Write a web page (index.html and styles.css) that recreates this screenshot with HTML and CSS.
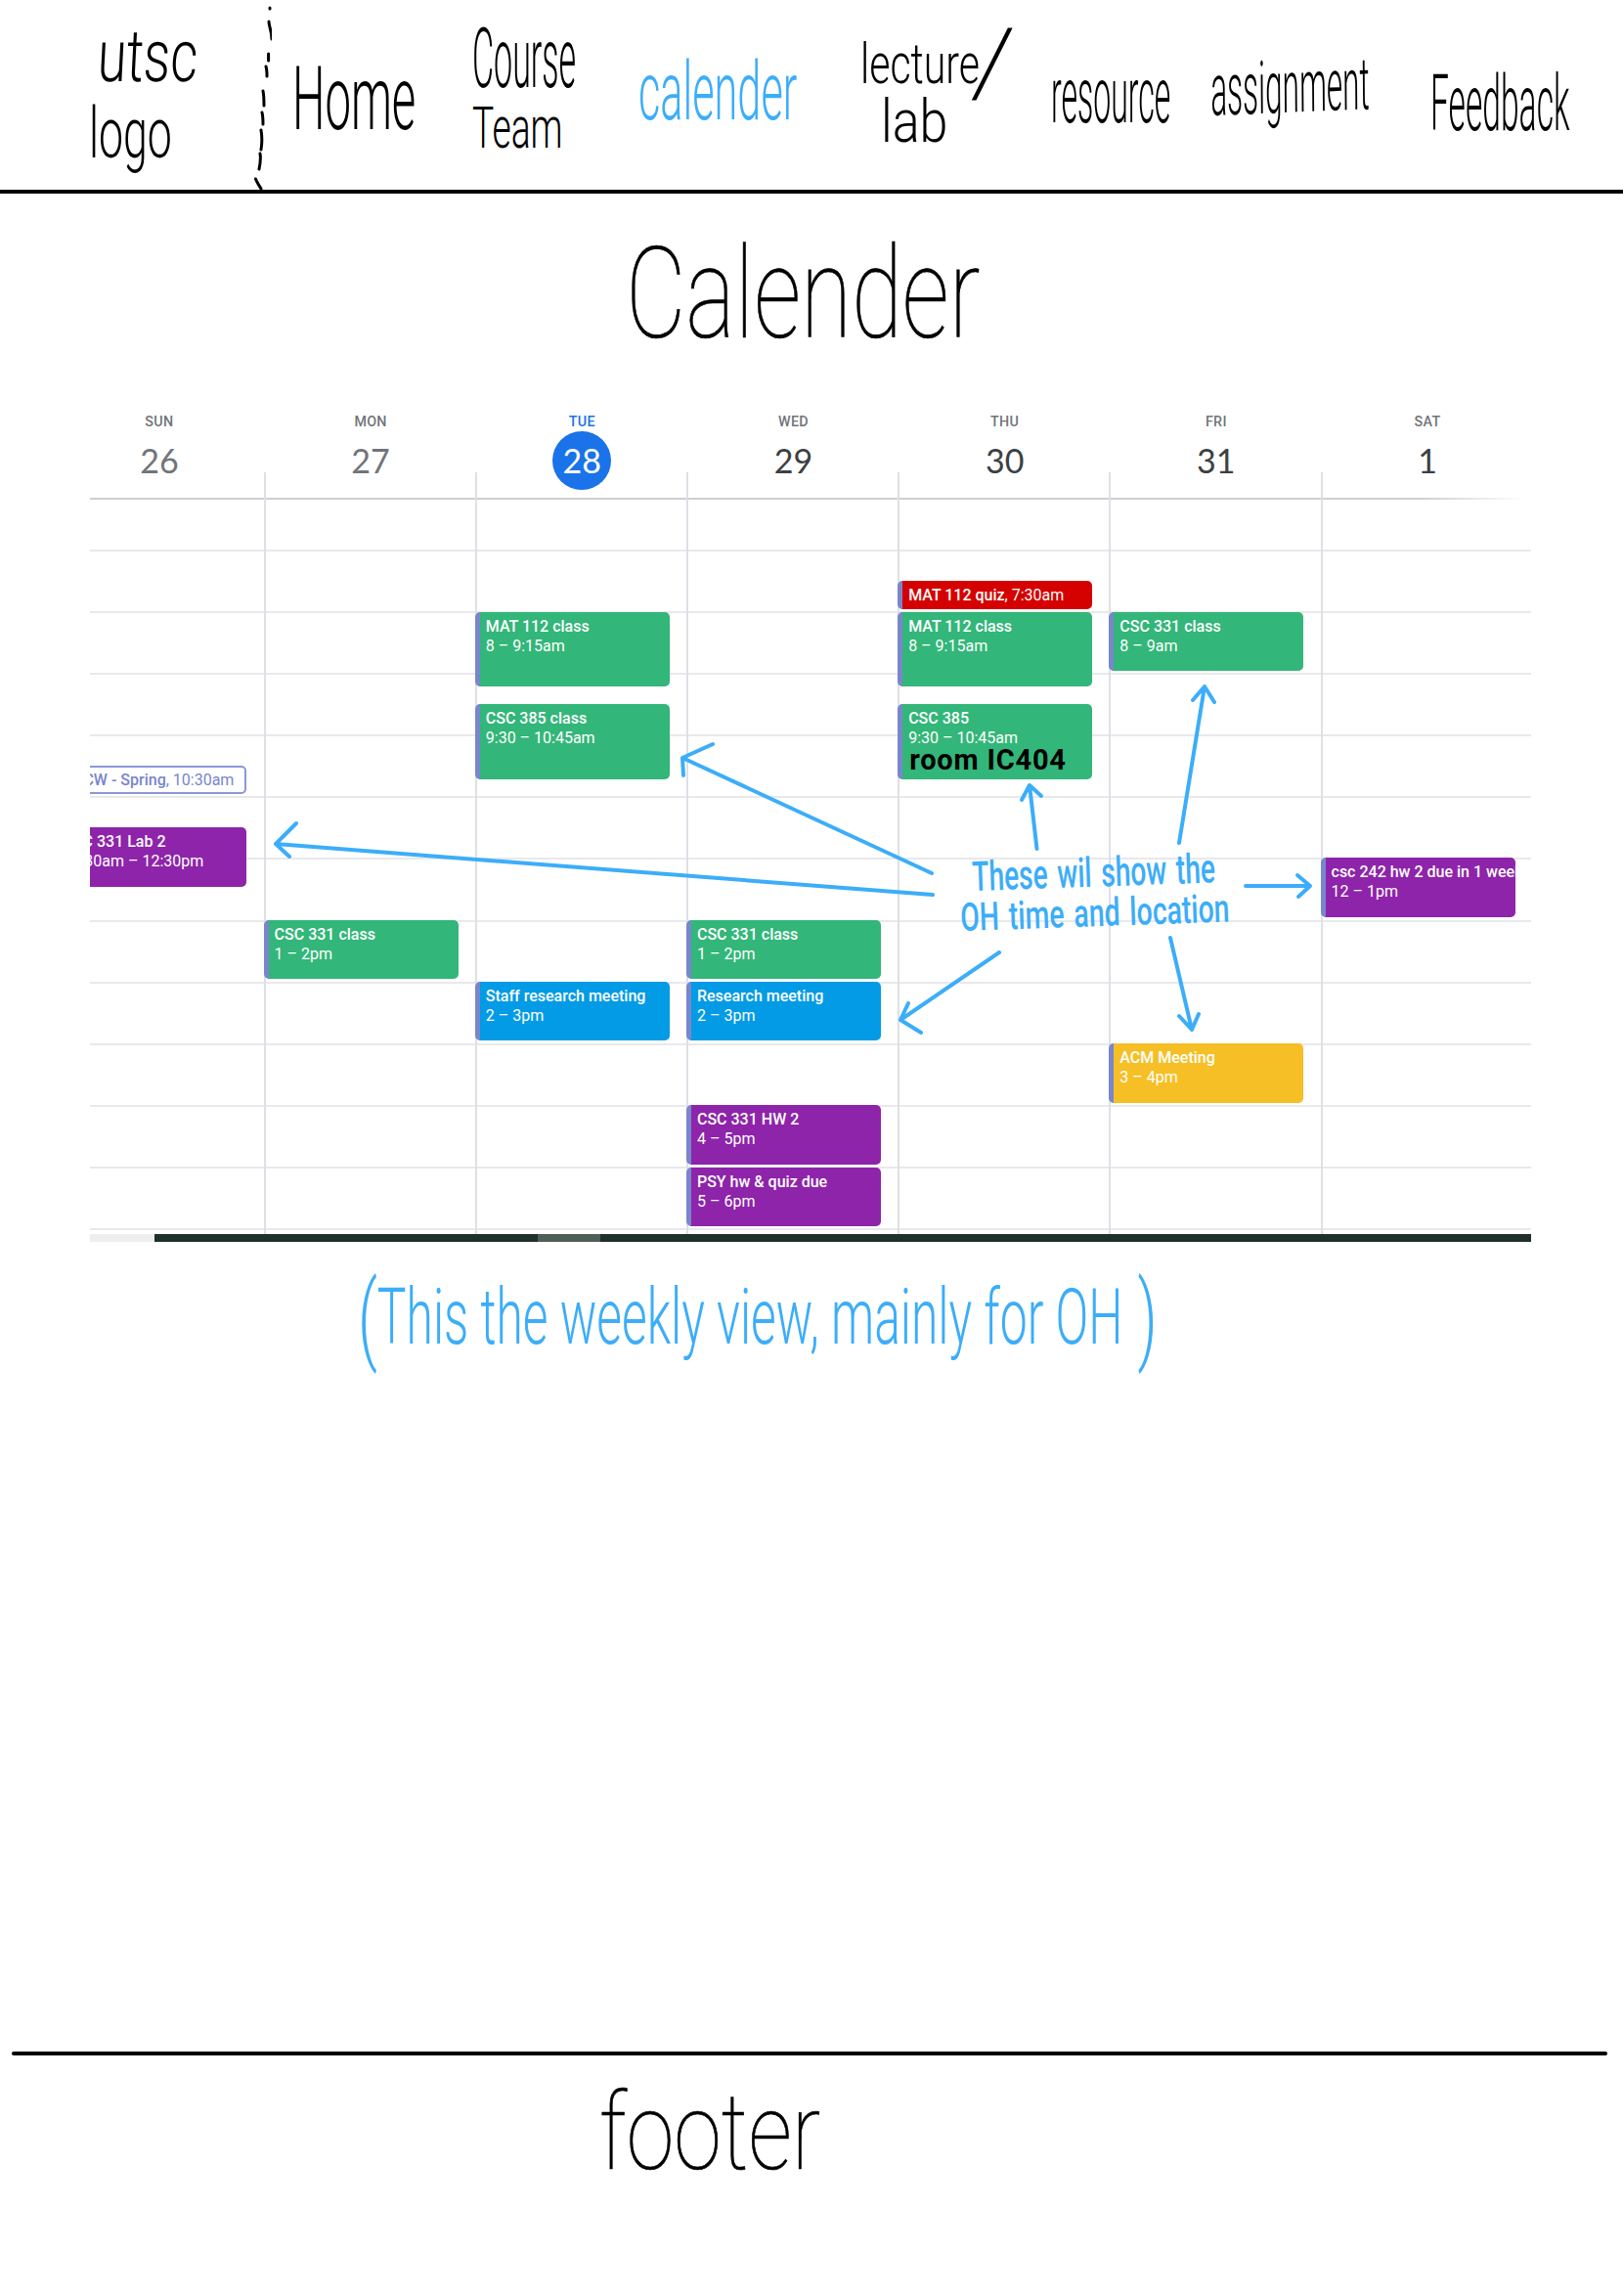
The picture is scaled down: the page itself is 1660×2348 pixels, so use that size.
FILE: index.html
```html
<!DOCTYPE html>
<html lang="en">
<head>
<meta charset="utf-8">
<title>Calender wireframe</title>
<link rel="stylesheet" href="styles.css">
</head>
<body>
<div class="page">
  <header class="site-head">
    <div class="stack stack-logo">
      <div class="hw hw-utsc"><span>utsc</span></div>
      <div class="hw hw-logo"><span>logo</span></div>
    </div>
    <svg class="divider" width="18" height="194" viewBox="0 0 18 194" aria-hidden="true">
      <path d="M16 8v1M15 22c0 5 3 10 3 18M14.600 55v7M12 68c1 3 1 6 1 10M9 93c1 5 1 10 1 15M8 115c1 4 1 8 1 12M7 133c1 6 1 14 0 20M6 157c1 5 0 11-1 16M1.500 183c1 3 3 6 5.500 10"/>
    </svg>
    <nav class="nav">
      <a class="hw hw-home"><span>Home</span></a>
      <a class="stack stack-course">
        <div class="hw hw-course"><span>Course</span></div>
        <div class="hw hw-team"><span>Team</span></div>
      </a>
      <a class="hw hw-calender"><span>calender</span></a>
      <a class="stack stack-lecture">
        <div class="hw hw-lecture"><span>lecture</span></div>
        <div class="hw hw-lab"><span>lab</span></div>
      </a>
      <div class="hw hw-slash"><span>/</span></div>
      <a class="hw hw-resource"><span>resource</span></a>
      <a class="hw hw-assignment"><span>assignment</span></a>
      <a class="hw hw-feedback"><span>Feedback</span></a>
    </nav>
  </header>

  <main class="main">
    <h1 class="hw hw-title"><span>Calender</span></h1>

    <section class="cal">
      <div class="cal-inner">
        <div class="cal-head">
          <div class="dh"><div class="dh-name">Sun</div><div class="dh-num dim">26</div></div>
          <div class="dh"><div class="dh-name">Mon</div><div class="dh-num dim">27</div></div>
          <div class="dh today"><div class="dh-name">Tue</div><div class="dh-num">28</div></div>
          <div class="dh"><div class="dh-name">Wed</div><div class="dh-num">29</div></div>
          <div class="dh"><div class="dh-name">Thu</div><div class="dh-num">30</div></div>
          <div class="dh"><div class="dh-name">Fri</div><div class="dh-num">31</div></div>
          <div class="dh"><div class="dh-name">Sat</div><div class="dh-num">1</div></div>
        </div>
        <div class="cal-body">
          <div class="head-rule"></div>
          <div class="hours"></div>
          <div class="days">
            <div class="day">
              <div class="ev outline" style="margin-top:300px;height:29px"><b>CW - Spring</b>, 10:30am</div>
              <div class="ev purple" style="margin-top:34px;height:61px"><b>CSC 331 Lab 2</b>10:30am – 12:30pm</div>
            </div>
            <div class="day">
              <div class="ev green" style="margin-top:458px;height:60px"><b>CSC 331 class</b>1 – 2pm</div>
            </div>
            <div class="day">
              <div class="ev green" style="margin-top:143px;height:76px"><b>MAT 112 class</b>8 – 9:15am</div>
              <div class="ev green" style="margin-top:18px;height:77px"><b>CSC 385 class</b>9:30 – 10:45am</div>
              <div class="ev blue" style="margin-top:207px;height:60px"><b>Staff research meeting</b>2 – 3pm</div>
            </div>
            <div class="day">
              <div class="ev green" style="margin-top:458px;height:60px"><b>CSC 331 class</b>1 – 2pm</div>
              <div class="ev blue" style="margin-top:3px;height:60px"><b>Research meeting</b>2 – 3pm</div>
              <div class="ev purple" style="margin-top:66px;height:61px"><b>CSC 331 HW 2</b>4 – 5pm</div>
              <div class="ev purple" style="margin-top:3px;height:60px"><b>PSY hw &amp; quiz due</b>5 – 6pm</div>
            </div>
            <div class="day">
              <div class="ev red one" style="margin-top:111px;height:29px"><b>MAT 112 quiz</b>, 7:30am</div>
              <div class="ev green" style="margin-top:3px;height:76px"><b>MAT 112 class</b>8 – 9:15am</div>
              <div class="ev green" style="margin-top:18px;height:77px"><b>CSC 385</b>9:30 – 10:45am<div class="room">room IC404</div></div>
            </div>
            <div class="day">
              <div class="ev green" style="margin-top:143px;height:60px"><b>CSC 331 class</b>8 – 9am</div>
              <div class="ev yellow" style="margin-top:381px;height:61px"><b>ACM Meeting</b>3 – 4pm</div>
            </div>
            <div class="day">
              <div class="ev purple" style="margin-top:394px;height:61px"><b>csc 242 hw 2 due in 1 week</b>12 – 1pm</div>
            </div>
          </div>
        </div>
      </div>
      <div class="scrollbar">
        <div class="sb-track"></div>
        <div class="sb-dark-a"></div>
        <div class="sb-mid"></div>
        <div class="sb-dark-b"></div>
      </div>
    </section>

    <p class="hw hw-caption"><span><i class="paren">(</i>This the weekly view, mainly for OH<i class="paren paren-end">)</i></span></p>
  </main>

  <footer class="site-foot">
    <div class="foot-rule"></div>
    <div class="hw hw-footer"><span>footer</span></div>
  </footer>

  <svg class="arrows" width="1660" height="1100" viewBox="0 0 1660 1100" aria-hidden="true">
    <path d="M953 893 698 775M729 761 698 775 699 793"/>
    <path d="M954 915 282 863M303 842 282 863 296 876"/>
    <path d="M1060.500 868 1053 803M1045 818 1053 803 1065 814"/>
    <path d="M1206 862 1232 702M1220 716 1232 702 1242 718"/>
    <path d="M1274 906 1340 906M1327 895 1340 906 1328 917"/>
    <path d="M1022 974 921 1043M929 1026 921 1043 942 1056"/>
    <path d="M1197 959 1219 1053M1206 1039 1219 1053 1226 1037"/>
  </svg>
  <div class="note note-a"><span>These wil show the</span></div>
  <div class="note note-b"><span>OH time and location</span></div>
</div>
</body>
</html>
```

FILE: styles.css
```css
* { box-sizing: border-box; }
html, body { margin: 0; padding: 0; background: #fff; }
.page {
  position: relative;
  width: 1660px;
  height: 2348px;
  overflow: hidden;
  font-family: Roboto, "Liberation Sans", sans-serif;
  color: #000;
}

/* handwriting: a tall light face squeezed sideways */
.hw {
  display: block;
  margin: 0;
  font-weight: 300;
  line-height: 1;
  white-space: nowrap;
  color: #000;
}
.hw > span { display: inline-block; transform-origin: 0 0; }

.site-head {
  display: flex;
  align-items: flex-start;
  height: 198px;
  padding-left: 91px;
  border-bottom: 4px solid #000;
}
.stack { display: flex; flex-direction: column; color: inherit; }
.nav { display: flex; align-items: flex-start; }

.stack-logo { width: 110px; }
.hw-utsc { font-size: 75px; margin: 20px 0 0 11px; }
.hw-utsc > span { transform: scaleX(.72) skewX(-4deg); }
.hw-logo { font-size: 72px; margin-top: 6px; }
.hw-logo > span { transform: scaleX(.62); }

.divider { flex: none; margin-left: 59px; fill: none; stroke: #000; stroke-width: 3; stroke-linecap: round; }

.hw-home { width: 124px; margin: 57px 0 0 21px; font-size: 90px; }
.hw-home > span { transform: scaleX(.525); }

.stack-course { width: 107px; margin: 18px 0 0 60px; }
.hw-course { font-size: 85px; margin-left: 0; }
.hw-course > span { transform: scaleX(.4); }
.hw-team { font-size: 60px; margin-top: -2px; }
.hw-team > span { transform: scaleX(.62); }

.hw-calender { width: 161px; margin: 52px 0 0 63px; font-size: 84px; color: #3cadf9; }
.hw-calender > span { transform: scaleX(.515); }

.stack-lecture { width: 121px; margin: 37px 0 0 69px; }
.hw-lecture { font-size: 57px; margin-left: -3px; }
.hw-lecture > span { transform: scaleX(.72); }
.hw-lab { font-size: 62px; margin: -1px 0 0 18px; }
.hw-lab > span { transform: scaleX(.84); }

.hw-slash { width: 41px; margin: 16px 0 0 -12px; font-size: 95px; font-weight: 100; -webkit-text-stroke: .8px #000; }
.hw-slash > span { transform: scaleX(1.3); }

.hw-resource { width: 123px; margin: 58px 0 0 42px; font-size: 80px; }
.hw-resource > span { transform: scaleX(.4); }
.hw-assignment { width: 164px; margin: 55px 0 0 40px; font-size: 75px; }
.hw-assignment > span { transform: scaleX(.42) rotate(-1deg); }
.hw-feedback { width: 145px; margin: 66px 0 0 61px; font-size: 80px; }
.hw-feedback > span { transform: scaleX(.42); }

.main { height: 1900px; padding-top: 38px; }
.hw-title { margin-left: 640px; font-size: 130px; font-weight: 100; height: 125px; -webkit-text-stroke: .7px #000; }
.hw-title > span { transform: scaleX(.73); }

/* calendar */
.cal { margin: 59px 0 0 92px; width: 1474px; overflow: hidden; }
.cal-inner { width: 1513.4px; margin-left: -38.6px; }
.cal-head { display: grid; grid-template-columns: repeat(7, 216.2px); height: 63px; margin-left: 1.4px; }
.dh { display: flex; flex-direction: column; align-items: center; color: #3c4043; }
.dh-name {
  height: 22px;
  font-size: 14.3px;
  font-weight: 500;
  line-height: 22px;
  letter-spacing: .3px;
  text-transform: uppercase;
  color: #70757a;
}
.dh-num {
  position: relative;
  display: flex;
  align-items: center;
  justify-content: center;
  flex: none;
  width: 60px;
  height: 60px;
  margin-top: -1px;
  border-radius: 50%;
  font-family: Lato, Roboto, sans-serif;
  font-size: 34px;
  line-height: 1;
}
.dh-num.dim { color: #70757a; }
.today .dh-name { color: #1a73e8; }
.today .dh-num { background: #1a73e8; color: #fff; }

.cal-body { display: grid; height: 779px; }
.cal-body > * { grid-area: 1 / 1; }
.head-rule {
  height: 2px;
  margin-top: 26px;
  margin-right: 6px;
  background: linear-gradient(to right, #cfcfd2 0, #cfcfd2 93%, rgba(207,207,210,0) 100%);
}
.hours {
  height: 751px;
  margin-top: 28px;
  background-image: repeating-linear-gradient(to bottom, transparent 0, transparent 51px, #e9e9ec 51px, #e9e9ec 53px, transparent 53px, transparent 63.1px);
}
.days { display: grid; grid-template-columns: repeat(7, 216.2px); }
.day { border-left: 2px solid #dfe0e5; min-width: 0; }

.ev {
  width: 199px;
  margin-left: -2px;
  padding: 5px 0 0 6px;
  overflow: hidden;
  border-left: 5px solid #7986cb;
  border-radius: 5px;
  font-size: 16px;
  line-height: 19.5px;
  white-space: nowrap;
  color: #fff;
}
.ev b { display: block; font-weight: 500; }
.ev.one b, .ev.outline b { display: inline; }
.green { background: #33b679; }
.blue { background: #039be5; }
.purple { background: #8e24aa; }
.red { background: #d50000; }
.yellow { background: #f6bf26; }
.ev.outline {
  padding: 3px 11px 0 0;
  border: 2px solid #8d97d6;
  background: #fff;
  color: #7986cb;
  text-align: right;
}
.room {
  margin: -2px 0 0 1px;
  font-size: 29px;
  font-weight: 700;
  line-height: 30px;
  letter-spacing: .8px;
  color: #000;
}

.scrollbar { display: flex; height: 8px; }
.sb-track { width: 66px; background: #eeeeee; }
.sb-dark-a { width: 392px; background: #20312b; }
.sb-mid { width: 64px; background: #4f5f58; }
.sb-dark-b { flex: 1; background: #20312b; }

.hw-caption { margin: 20px 0 0 366px; font-size: 80px; color: #3cadf9; }
.hw-caption > span { transform: scaleX(.622); }
.paren { display: inline-block; font-size: 100px; font-style: normal; transform: translateY(8px); }
.paren-end { margin-left: 24px; }

/* footer */
.foot-rule { height: 4px; margin: 0 16px 0 12px; border-radius: 2px; background: #000; }
.hw-footer { margin: 24px 0 0 613px; font-size: 110px; font-weight: 100; -webkit-text-stroke: .7px #000; }
.hw-footer > span { transform: scaleX(.8); }

/* annotations lying over the calendar */
.arrows {
  position: absolute;
  top: 0;
  left: 0;
  fill: none;
  stroke: #3cadf9;
  stroke-width: 4;
  stroke-linecap: round;
  stroke-linejoin: round;
}
.note {
  position: absolute;
  font-weight: 500;
  line-height: 1;
  white-space: nowrap;
  color: #3cadf9;
}
.note span { display: inline-block; transform-origin: 0 100%; word-spacing: 4px; }
.note-a { left: 995px; top: 876px; font-size: 42px; }
.note-a span { transform: rotate(-2deg) scaleX(.67); }
.note-b { left: 983px; top: 919px; font-size: 40px; }
.note-b span { transform: rotate(-2deg) scaleX(.71); }
```
